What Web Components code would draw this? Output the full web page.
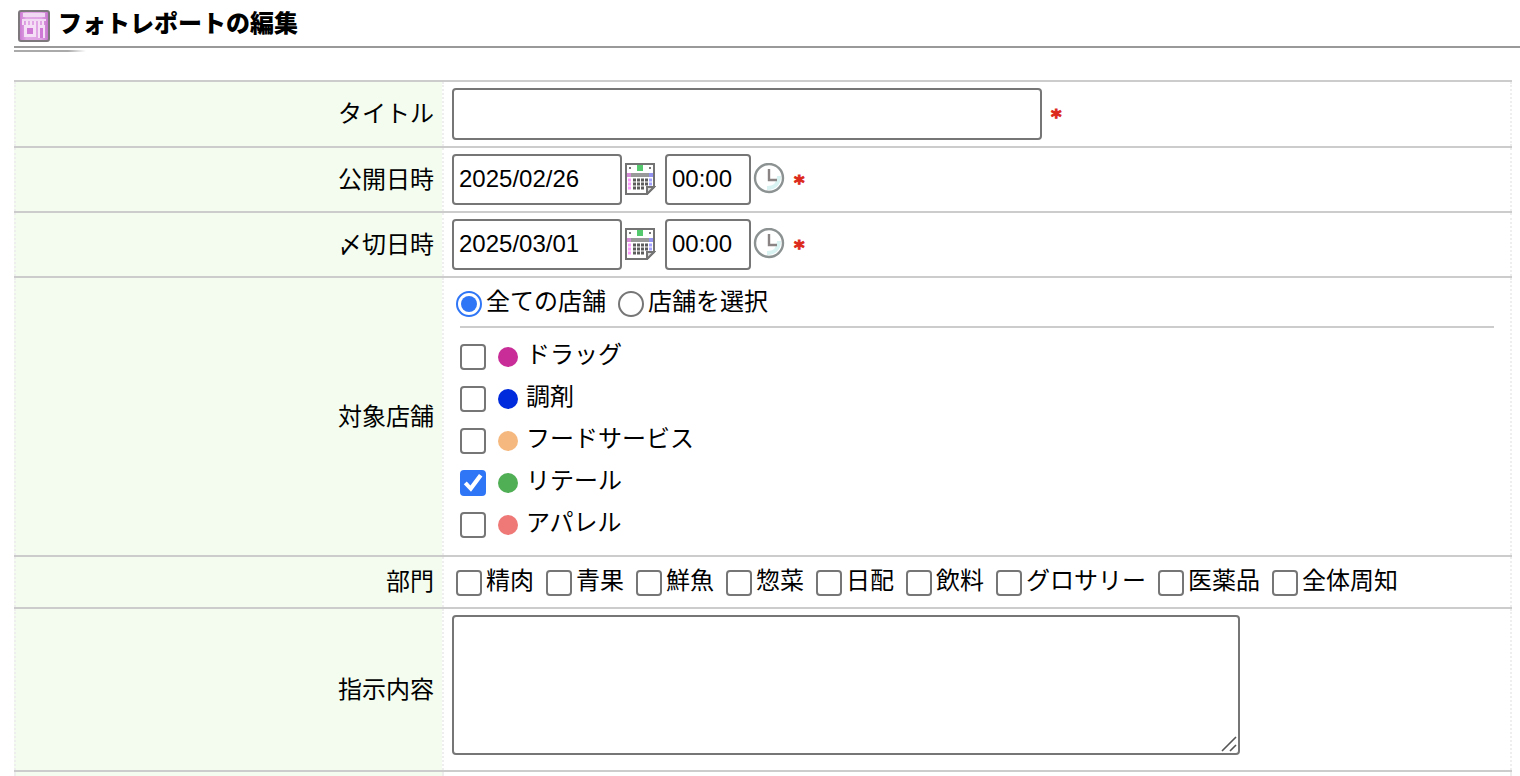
<!DOCTYPE html>
<html lang="ja">
<head>
<meta charset="utf-8">
<title>フォトレポートの編集</title>
<style>
html, body { margin: 0; background: #fff; }
body { font: 24px/32px "Liberation Sans", "Noto Sans CJK JP", sans-serif; color: #000; }
</style>
</head>
<body>
<report-page></report-page>

<script>
function define(name, html) {
  const template = document.createElement('template');
  template.innerHTML = html;
  customElements.define(name, class extends HTMLElement {
    constructor() {
      super();
      this.attachShadow({ mode: 'open' }).append(template.content.cloneNode(true));
    }
    connectedCallback() {
      const input = this.shadowRoot.querySelector('input');
      if (!input) return;
      if (this.hasAttribute('checked')) input.checked = true;
      if (this.hasAttribute('value')) input.value = this.getAttribute('value');
      if (this.hasAttribute('label')) input.setAttribute('aria-label', this.getAttribute('label'));
    }
  });
}

const fieldCss = `
  .field { box-sizing: border-box; height: 51px; margin: 0; padding: 0 5px 2px; border: 2px solid #767676; border-radius: 4px;
    background: #fff; color: #000; font: inherit; }
  button { display: block; width: 32px; height: 32px; margin: 0 0 2px; padding: 0; border: 0; background: none; cursor: pointer; }
  svg { display: block; }`;

const choiceCss = `
  label { display: flex; align-items: center; gap: 4px; white-space: nowrap; }
  .text { padding-bottom: 4px; }
  input { appearance: none; box-sizing: border-box; flex: none; width: 26px; height: 26px; margin: 0;
    border: 2px solid #767676; background: #fff; display: grid; place-items: center; }
  input[type=checkbox] { border-radius: 4px; }
  input[type=radio] { border-radius: 50%; }
  input:checked { border-color: #2f76f6; }
  input[type=checkbox]:checked { background: #2f76f6; }
  input[type=checkbox]:checked::before { content: ""; width: 20px; height: 20px; background: #fff;
    clip-path: polygon(4% 56%, 19% 43%, 37% 62%, 80% 5%, 97% 17%, 40% 94%); }
  input[type=radio]:checked::before { content: ""; width: 16px; height: 16px; border-radius: 50%; background: #2f76f6; }`;

define('page-heading', `
<style>
  :host { display: block; margin-left: 14px; }
  h1 { display: flex; align-items: center; gap: 8px; margin: 0; padding: 10px 4px 4px; border-bottom: 2px solid #999; font-size: 24px; line-height: 32px; font-weight: 900; }
  svg { flex: none; }
  span { height: 32px; padding-bottom: 2px; margin-top: -2px; }
  .accent { width: 72px; height: 2px; margin-top: 2px; background: linear-gradient(to right, #aaa 75%, transparent); }
</style>
<h1>
  <svg width="32" height="32" viewBox="0 0 32 32" aria-hidden="true">
    <defs><linearGradient id="g" x1="0" x2="1"><stop offset="0" stop-color="#c873cf"/><stop offset=".25" stop-color="#e3a9e7"/><stop offset=".75" stop-color="#e0a2e4"/><stop offset="1" stop-color="#c36fca"/></linearGradient></defs>
    <rect x="1" y="1" width="30" height="30" rx="2" fill="url(#g)" stroke="#7c787c" stroke-width="2"/>
    <path d="M5 3h22v4H5z" fill="#f1d8f3"/>
    <path d="M4 9h24v2H4z" fill="#f1d8f3"/>
    <path d="M5 11v4M9 11v4M13 11v4M17 11v4M21 11v4M25 11v4" stroke="#f4dff5" stroke-width="2"/>
    <path d="M6 15h12v12H6zM20 15h7v13h-7z" fill="#f5dff6"/>
    <path d="M9 18h6v6H9zM22 18h3v10h-3z" fill="#cf78d6"/>
  </svg>
  <span><slot></slot></span>
</h1>
<div class="accent"></div>`);

define('form-row', `
<style>
  :host { display: grid; grid-template-columns: 428px minmax(0, 1fr); border-top: 2px solid #ccc; }
  .label, .content { box-sizing: border-box; display: flex; align-items: center; border-left: 2px dotted #eee; }
  .label { justify-content: flex-end; padding-right: 8px; background: #f3fcef; text-align: right; }
  .content { padding: 6px 16px 6px 8px; border-right: 2px dotted #eee; }
  :host([blank]) .content { padding-block: 0; }
  ::slotted(*) { min-width: 0; }
</style>
<div class="label"><slot name="label"></slot></div>
<div class="content"><slot></slot></div>`);

define('required-mark', `
<style>
  :host { display: block; padding-top: 4px; color: #dc2a1b; font: bold 20px/32px "DejaVu Sans", sans-serif; -webkit-text-stroke: 1px; }
</style>
<span title="必須">*</span>`);

define('date-field', `
<style>
  :host { display: flex; align-items: center; gap: 2px; }
  .field { width: 170px; }
  ${fieldCss}
</style>
<input class="field" type="text">
<button type="button" aria-label="カレンダー">
  <svg width="32" height="32" viewBox="0 0 32 32">
    <path d="M2 1h28v23l-7 7H2z" fill="#fff" stroke="#737373" stroke-width="2"/>
    <path d="M13 2h6v6h-6z" fill="#55c96d"/>
    <path d="M5 4h2v2H5zM25 4h2v2h-2z" fill="#777"/>
    <path d="M3 10h26v4H3z" fill="#999"/>
    <path d="M3 10h4v4H3z" fill="#d58bd5"/><path d="M25 10h4v4h-4z" fill="#9292ee"/>
    <path d="M4 17h3M4 21h3M4 25h3" stroke="#ff9cff" stroke-width="3"/>
    <path d="M25 17h3M25 21h3" stroke="#a3a3ff" stroke-width="3"/>
    <path d="M9 17h15M9 21h15M9 25h11" stroke="#5c5c5c" stroke-width="3" stroke-dasharray="3 1"/>
    <path d="M23 31v-7h7z" fill="#ddd" stroke="#737373" stroke-width="2"/>
  </svg>
</button>`);

define('time-field', `
<style>
  :host { display: flex; align-items: center; gap: 2px; }
  .field { width: 86px; }
  ${fieldCss}
</style>
<input class="field" type="text">
<button type="button" aria-label="時刻を選択">
  <svg width="32" height="32" viewBox="0 0 32 32">
    <circle cx="16" cy="15" r="14" fill="#fff" stroke="#8c9292" stroke-width="2.4"/>
    <path d="M26 13c0 7-4 12-12 12" fill="none" stroke="#d9f2f2" stroke-width="4"/>
    <path d="M16 6v11h8" fill="none" stroke="#8b8484" stroke-width="2.4"/>
  </svg>
</button>`);

define('check-option', `
<style>
  :host { display: block; }
  ${choiceCss}
</style>
<label><input type="checkbox"><slot name="marker"></slot><span class="text"><slot></slot></span></label>`);

define('color-dot', `
<style>
  :host { display: block; width: 20px; height: 20px; margin: 0 4px 0 8px; border-radius: 50%; background: var(--dot); }
</style>`);

define('store-scope', `
<style>
  :host { display: flex; gap: 12px; }
  ${choiceCss}
</style>
<label><input type="radio" name="scope" checked><span class="text">全ての店舗</span></label>
<label><input type="radio" name="scope"><span class="text">店舗を選択</span></label>`);

define('report-page', `
<style>
  :host { display: flex; flex-direction: column; min-height: 100vh; }
  form { flex: 1; display: flex; flex-direction: column; margin: 28px 8px 0 14px; }
  .line { display: flex; align-items: center; gap: 9px; }
  #title { box-sizing: border-box; width: 590px; height: 52px; margin: 0; padding: 0 6px; border: 2px solid #767676; border-radius: 4px; font: inherit; }
  .stores { flex: 1; }
  store-scope { padding: 2px 4px 4px; }
  .brands { display: flex; flex-direction: column; gap: 6px; margin-left: 8px; padding: 11px 0 6px; border-top: 2px solid #ccc; }
  .brands check-option { height: 36px; }
  .departments { display: flex; flex-wrap: wrap; gap: 0 12px; padding: 2px 4px 0; }
  .memo { position: relative; display: flex; margin-bottom: 9px; }
  textarea { box-sizing: border-box; width: 788px; height: 140px; margin: 0; padding: 4px; border: 2px solid #767676; border-radius: 4px; font: inherit; }
  textarea::-webkit-resizer { background: transparent; }
  .memo svg { position: absolute; right: 2px; bottom: 2px; pointer-events: none; }
  .rest { flex: 1; }
</style>
<page-heading>フォトレポートの編集</page-heading>
<form>
  <form-row>
    <label slot="label" for="title">タイトル</label>
    <div class="line"><input id="title" type="text"><required-mark></required-mark></div>
  </form-row>
  <form-row>
    <span slot="label">公開日時</span>
    <div class="line"><date-field value="2025/02/26" label="公開日"></date-field><time-field value="00:00" label="公開時刻"></time-field><required-mark></required-mark></div>
  </form-row>
  <form-row>
    <span slot="label">〆切日時</span>
    <div class="line"><date-field value="2025/03/01" label="〆切日"></date-field><time-field value="00:00" label="〆切時刻"></time-field><required-mark></required-mark></div>
  </form-row>
  <form-row>
    <span slot="label" id="stores">対象店舗</span>
    <div class="stores" role="group" aria-labelledby="stores">
      <store-scope></store-scope>
      <div class="brands">
        <check-option><color-dot slot="marker" style="--dot:#c82d98"></color-dot>ドラッグ</check-option>
        <check-option><color-dot slot="marker" style="--dot:#002bdc"></color-dot>調剤</check-option>
        <check-option><color-dot slot="marker" style="--dot:#f5b97f"></color-dot>フードサービス</check-option>
        <check-option checked><color-dot slot="marker" style="--dot:#50ae55"></color-dot>リテール</check-option>
        <check-option><color-dot slot="marker" style="--dot:#ee7977"></color-dot>アパレル</check-option>
      </div>
    </div>
  </form-row>
  <form-row>
    <span slot="label" id="departments">部門</span>
    <div class="departments" role="group" aria-labelledby="departments">
      <check-option>精肉</check-option>
      <check-option>青果</check-option>
      <check-option>鮮魚</check-option>
      <check-option>惣菜</check-option>
      <check-option>日配</check-option>
      <check-option>飲料</check-option>
      <check-option>グロサリー</check-option>
      <check-option>医薬品</check-option>
      <check-option>全体周知</check-option>
    </div>
  </form-row>
  <form-row>
    <label slot="label" for="memo">指示内容</label>
    <div class="memo">
      <textarea id="memo"></textarea>
      <svg width="18" height="18" viewBox="0 0 18 18" aria-hidden="true"><path d="M2 16 16 2M10 16l6-6" fill="none" stroke="#555" stroke-width="1.6"/></svg>
    </div>
  </form-row>
  <form-row class="rest" blank></form-row>
</form>`);
</script>
</body>
</html>
